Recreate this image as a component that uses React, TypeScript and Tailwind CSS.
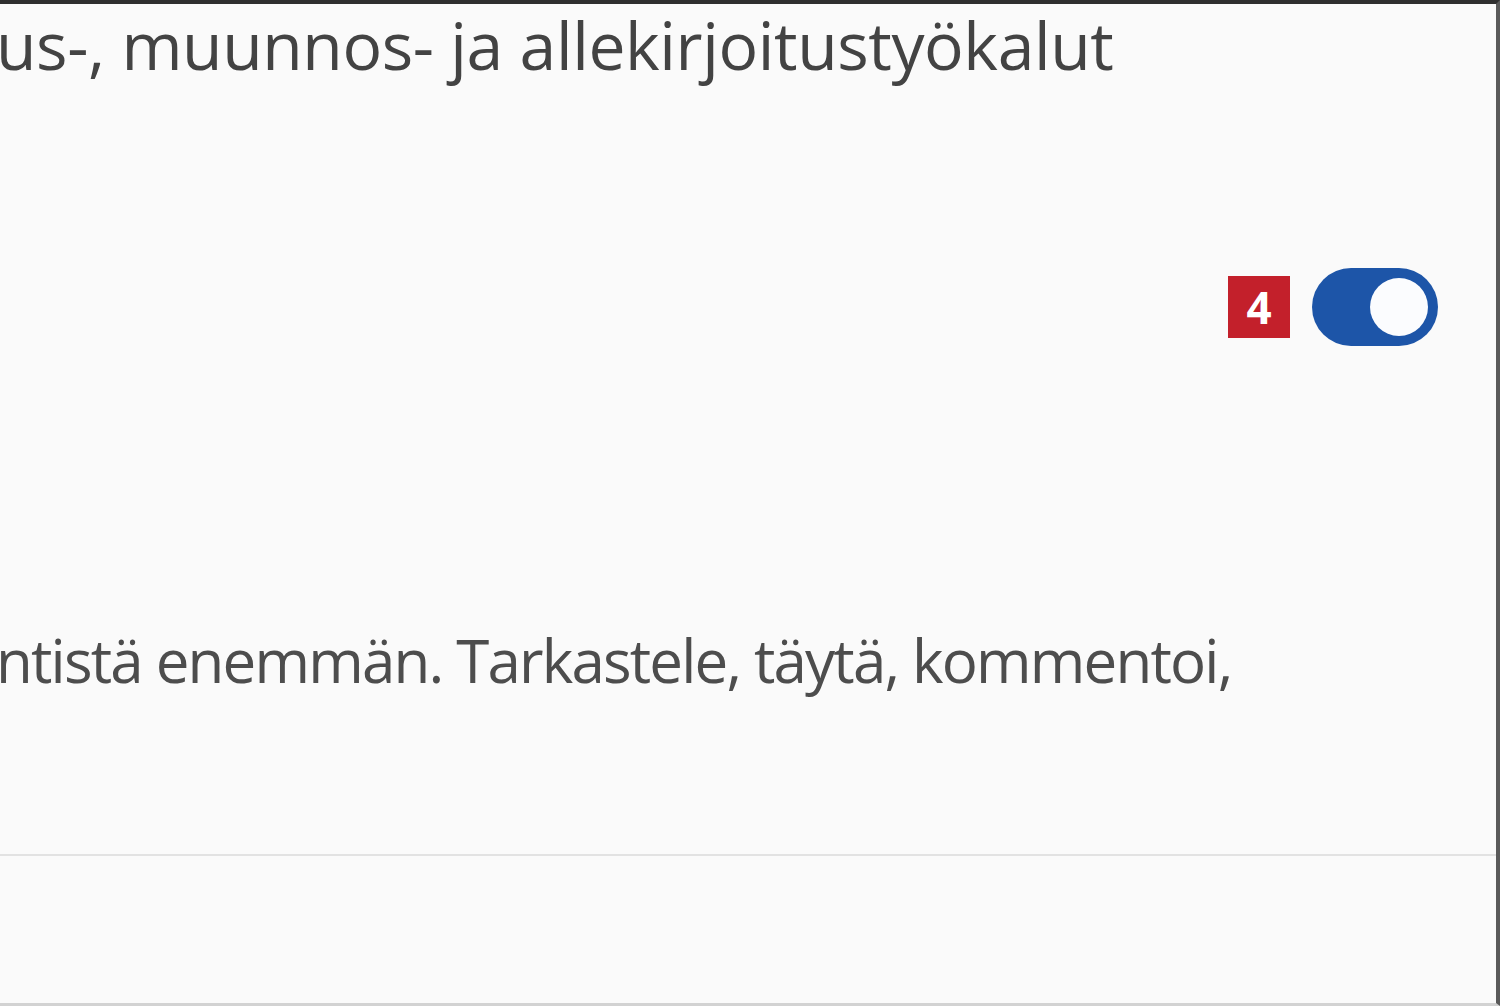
import React from "react";

const Toggle = () => (
  <div className="flex items-center gap-[22px]">
    <span className="flex h-[62px] w-[62px] items-center justify-center bg-[#c3202b] text-[44px] font-bold leading-none text-white">
      4
    </span>
    <div className="flex h-[78px] w-[126px] items-center justify-end rounded-full bg-[#1d55a8] pr-[10px]">
      <div className="h-[58px] w-[58px] rounded-full bg-[#fbfcfe]" />
    </div>
  </div>
);

const App = () => {
  return (
    <div
      className="flex h-[1006px] w-[1500px] flex-col overflow-hidden border-t-[4px] border-r-[4px] border-b-[3px] border-t-[#2f2f2f] border-r-[#5a5a5a] border-b-[#d2d2d2] bg-[#fafafa]"
      style={{ fontFamily: '"Open Sans", "Noto Sans", sans-serif' }}
    >
      {/* section title */}
      <h2 className="ml-[-4px] whitespace-nowrap text-[66px] leading-[80px] tracking-[-0.4px] text-[#434343]">
        us-, muunnos- ja allekirjoitustyökalut
      </h2>

      {/* switch row */}
      <div className="mt-[184px] flex justify-end pr-[58px]">
        <Toggle />
      </div>

      {/* description */}
      <p className="ml-[-4px] mt-[274px] whitespace-nowrap text-[60px] leading-[80px] tracking-[-1.8px] text-[#4d4d4d]">
        ntistä enemmän. Tarkastele, täytä, kommentoi,
      </p>

      <div className="mt-[154px] h-[2px] w-full bg-[#e2e2e2]" />
      <div className="flex-1" />
    </div>
  );
};

export default App;
